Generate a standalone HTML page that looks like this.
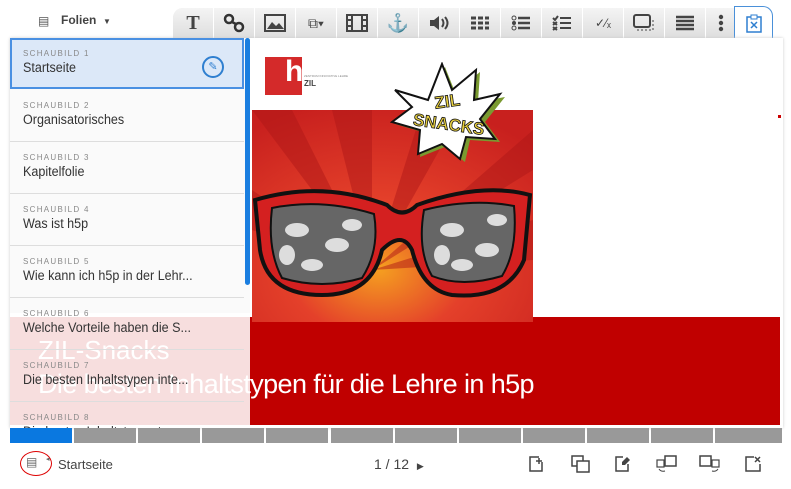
<!DOCTYPE html><html><head><meta charset="utf-8"><style>
body{margin:0;width:791px;height:489px;background:#fff;font-family:"Liberation Sans",sans-serif;position:relative;overflow:hidden}
.a{position:absolute}
.tab{position:absolute;top:8px;height:30px;width:40px;background:linear-gradient(#f4f4f4,#dedede);border-right:1px solid #fff;display:flex;align-items:center;justify-content:center;color:#444}
.item{position:absolute;left:10px;width:234px;height:51px;border-bottom:1px solid #ddd;background:#fafafa}
.item .n{position:absolute;left:13px;top:11px;font-size:8px;letter-spacing:1.3px;color:#888}
.item .t{position:absolute;left:13px;top:22px;font-size:13.5px;color:#333;transform:scaleX(0.93);transform-origin:left;white-space:nowrap}
.seg{position:absolute;top:428px;height:15px;width:62px;background:#999}
.bi{position:absolute;top:455px}
</style></head><body>
<div class="a" style="left:38px;top:14px;font-size:12px;color:#555">&#9636;</div>
<div class="a" style="left:61px;top:13px;font-size:12px;font-weight:bold;color:#444">Folien &nbsp;<span style="font-size:8px">▼</span></div>
<div class="a" style="left:173px;top:8px;width:562px;height:30px;background:#e4e4e4;border-radius:10px 0 0 0"></div>
<div class="tab" style="left:173px;border-radius:10px 0 0 0;font:bold 20px 'Liberation Serif',serif">T</div>
<div class="tab" style="left:214px"><svg width="22" height="20"><circle cx="6" cy="6" r="4" fill="none" stroke="#333" stroke-width="2.5"/><circle cx="16" cy="14" r="4" fill="none" stroke="#333" stroke-width="2.5"/><path d="M9 9l4 2" stroke="#333" stroke-width="2.5"/></svg></div>
<div class="tab" style="left:255px"><svg width="22" height="18"><rect x="1" y="1" width="20" height="16" fill="none" stroke="#444" stroke-width="2"/><path d="M3 15l5-7 4 4 3-3 5 6z" fill="#444"/></svg></div>
<div class="tab" style="left:296px;font-size:14px">⧉▾</div>
<div class="tab" style="left:337px"><svg width="22" height="18"><rect x="1" y="1" width="20" height="16" fill="none" stroke="#444" stroke-width="2"/><path d="M6 1v16M16 1v16M1 6h5M1 12h5M16 6h5M16 12h5" stroke="#444" stroke-width="2"/></svg></div>
<div class="tab" style="left:378px;font-size:18px">⚓</div>
<div class="tab" style="left:419px"><svg width="22" height="18"><path d="M2 6h4l5-4v14l-5-4H2z" fill="#444"/><path d="M14 5q3 4 0 8M17 3q5 6 0 12" stroke="#444" stroke-width="2" fill="none"/></svg></div>
<div class="tab" style="left:460px"><svg width="20" height="16"><path d="M1 3h18M1 8h18M1 13h18" stroke="#444" stroke-width="3" stroke-dasharray="5 2"/></svg></div>
<div class="tab" style="left:501px"><svg width="20" height="16"><circle cx="3" cy="3" r="2" fill="none" stroke="#444"/><circle cx="3" cy="8" r="2" fill="#444"/><circle cx="3" cy="13" r="2" fill="none" stroke="#444"/><path d="M7 3h12M7 8h12M7 13h12" stroke="#444" stroke-width="2.5"/></svg></div>
<div class="tab" style="left:542px"><svg width="20" height="16"><path d="M1 3l2 2 3-4M1 7l4 3M5 7l-4 3M1 12l4 3M5 12l-4 3M8 3h11M8 8h11M8 13h11" stroke="#444" stroke-width="2" fill="none"/></svg></div>
<div class="tab" style="left:583px;font-size:12px">✓⁄ₓ</div>
<div class="tab" style="left:624px"><svg width="22" height="18"><rect x="1" y="1" width="16" height="12" rx="2" fill="none" stroke="#444" stroke-width="2"/><path d="M4 16h16v-10" stroke="#444" stroke-dasharray="2 2" fill="none"/></svg></div>
<div class="tab" style="left:665px"><svg width="20" height="16"><path d="M1 2h18M1 6h18M1 10h18M1 14h18" stroke="#444" stroke-width="2.5"/></svg></div>
<div class="tab" style="left:706px;width:29px"><svg width="6" height="18"><circle cx="3" cy="3" r="2.2" fill="#444"/><circle cx="3" cy="9" r="2.2" fill="#444"/><circle cx="3" cy="15" r="2.2" fill="#444"/></svg></div>
<div class="a" style="left:734px;top:6px;width:37px;height:32px;border:1px solid #4a90d9;border-bottom:none;border-radius:0 10px 0 0;background:#fff;display:flex;align-items:center;justify-content:center"><svg width="18" height="20"><rect x="2" y="4" width="14" height="15" fill="none" stroke="#2f7fd0" stroke-width="1.5"/><rect x="6" y="2" width="6" height="4" fill="#fff" stroke="#2f7fd0"/><path d="M6 9l6 6M12 9l-6 6" stroke="#2f7fd0" stroke-width="1.5"/></svg></div>
<div class="a" style="left:10px;top:38px;width:773px;height:390px;background:#fff;box-shadow:0 0 3px #ccc"></div>
<!-- slide -->
<div class="a" style="left:10px;top:317px;width:770px;height:108px;background:#c00000"></div>
<svg class="a" style="left:252px;top:110px" width="281" height="212" viewBox="0 0 281 212">
<defs><radialGradient id="g" cx="0.45" cy="0.75" r="0.8"><stop offset="0" stop-color="#f5a020"/><stop offset="0.4" stop-color="#e4402a"/><stop offset="1" stop-color="#c8201e"/></radialGradient></defs>
<rect width="281" height="212" fill="url(#g)"/>
<g fill="#b01818" opacity="0.5"><path d="M120 160L0 0h40z"/><path d="M120 160L80 0h40z"/><path d="M120 160L170 0h40z"/><path d="M120 160L281 20v40z"/><path d="M120 160L281 110v40z"/><path d="M120 160L0 80v40z"/></g>
<path d="M3 90 Q70 70 135 95 Q150 110 165 95 Q230 72 278 85 L272 150 Q255 190 200 185 Q170 180 160 140 Q150 120 130 140 Q120 185 70 185 Q15 185 8 140Z" fill="#d42020" stroke="#111" stroke-width="4"/>
<path d="M20 98 Q70 88 122 104 Q128 140 110 168 Q70 180 30 168 Q15 140 20 98Z" fill="#666" stroke="#111" stroke-width="2"/>
<path d="M172 100 Q220 88 262 96 Q266 140 250 166 Q210 178 180 166 Q165 140 172 100Z" fill="#666" stroke="#111" stroke-width="2"/>
<g fill="#ddd"><ellipse cx="45" cy="120" rx="12" ry="7"/><ellipse cx="85" cy="135" rx="12" ry="7"/><ellipse cx="60" cy="155" rx="11" ry="6"/><ellipse cx="100" cy="115" rx="10" ry="6"/><ellipse cx="35" cy="145" rx="8" ry="10"/><ellipse cx="200" cy="120" rx="12" ry="7"/><ellipse cx="235" cy="140" rx="12" ry="7"/><ellipse cx="210" cy="155" rx="11" ry="6"/><ellipse cx="245" cy="110" rx="10" ry="6"/><ellipse cx="190" cy="145" rx="8" ry="10"/></g>
</svg>
<svg class="a" style="left:390px;top:62px" width="120" height="105"><path d="M10 30L40 40 55 5 65 30 90 10 88 40 115 35 95 60 110 80 80 78 75 100 55 85 30 95 32 70 5 62 25 48Z" fill="#7a9a30"/><path d="M5 28L38 38 52 2 62 28 86 8 84 38 110 32 90 57 105 77 76 75 70 97 52 82 28 92 30 68 2 60 22 45Z" fill="#fff" stroke="#111" stroke-width="2"/><text x="58" y="45" font-size="17" font-weight="bold" fill="#e8d040" stroke="#111" stroke-width="0.8" text-anchor="middle" transform="rotate(-8 58 45)">ZIL</text><text x="58" y="68" font-size="17" font-weight="bold" fill="#e8d040" stroke="#111" stroke-width="0.8" text-anchor="middle" transform="rotate(8 58 68)">SNACKS</text></svg>
<div class="a" style="left:265px;top:57px;width:37px;height:38px;background:#d42a2a"></div>
<div class="a" style="left:285px;top:57px;font:bold 30px 'Liberation Sans';color:#fff;line-height:30px">h</div>
<div class="a" style="left:304px;top:79px;font:bold 8px 'Liberation Sans';color:#444">ZIL</div>
<div class="a" style="left:304px;top:74px;font-size:3px;color:#888">ZENTRUM INNOVATIVE LEHRE</div>
<div class="a" style="left:778px;top:115px;width:3px;height:3px;background:#c00"></div>
<div class="a" style="left:38px;top:335px;font-size:26px;color:#fff;white-space:nowrap">ZIL-Snacks</div>
<div class="a" style="left:38px;top:369px;font-size:27px;color:#fff;white-space:nowrap;letter-spacing:-0.6px">Die besten Inhaltstypen für die Lehre in h5p</div>
<!-- sidebar -->
<div class="a" style="left:10px;top:38px;width:240px;height:390px;overflow:hidden">
<div class="a" style="left:0;top:0;width:240px;height:275px;background:#fafafa"></div>
<div class="a" style="left:0;top:275px;width:240px;height:115px;background:rgba(255,255,255,0.87)"></div>
</div>
<div class="item" style="top:38px;background:#dce8f8;border:2px solid #4a90e2;width:230px;height:47px"><div class="n" style="left:11px;top:9px">SCHAUBILD 1</div><div class="t" style="left:11px;top:20px">Startseite</div><div class="a" style="left:190px;top:16px;width:18px;height:18px;border:2px solid #2f7fd0;border-radius:50%;color:#2f7fd0;font-size:11px;text-align:center;line-height:18px">✎</div></div>
<div class="item" style="top:90px"><div class="n">SCHAUBILD 2</div><div class="t">Organisatorisches</div></div>
<div class="item" style="top:142px"><div class="n">SCHAUBILD 3</div><div class="t">Kapitelfolie</div></div>
<div class="item" style="top:194px"><div class="n">SCHAUBILD 4</div><div class="t">Was ist h5p</div></div>
<div class="item" style="top:246px"><div class="n">SCHAUBILD 5</div><div class="t">Wie kann ich h5p in der Lehr...</div></div>
<div class="item" style="top:298px;background:transparent"><div class="n">SCHAUBILD 6</div><div class="t">Welche Vorteile haben die S...</div></div>
<div class="item" style="top:350px;background:transparent"><div class="n">SCHAUBILD 7</div><div class="t">Die besten Inhaltstypen inte...</div></div>
<div class="item" style="top:402px;background:transparent;height:26px;overflow:hidden;border:none"><div class="n">SCHAUBILD 8</div><div class="t">Die besten Inhaltstypen tec...</div></div>
<div class="a" style="left:245px;top:38px;width:5px;height:247px;background:#1a7ee0;border-radius:3px"></div>
<div class="seg" style="left:10px;background:#0a78e0"></div>
<div class="seg" style="left:74px"></div><div class="seg" style="left:138px"></div><div class="seg" style="left:202px"></div><div class="seg" style="left:266px"></div><div class="seg" style="left:331px"></div><div class="seg" style="left:395px"></div><div class="seg" style="left:459px"></div><div class="seg" style="left:523px"></div><div class="seg" style="left:587px"></div><div class="seg" style="left:651px"></div><div class="seg" style="left:715px;width:67px"></div>
<!-- bottom -->
<div class="a" style="left:20px;top:451px;width:30px;height:23px;border:1.5px solid #d00;border-radius:50%"></div>
<div class="a" style="left:26px;top:455px;font-size:12px;color:#666">&#9636;</div>
<div class="a" style="left:46px;top:455px;font-size:7px;color:#666">◂</div>
<div class="a" style="left:58px;top:457px;font-size:13px;color:#444">Startseite</div>
<div class="a" style="left:374px;top:456px;font-size:14px;color:#444">1 / 12 &nbsp;<span style="font-size:9px">▶</span></div>
<svg class="bi" style="left:528px" width="18" height="18"><path d="M11 2H2v14h12V7" fill="none" stroke="#444" stroke-width="1.5"/><path d="M11 3v6M8 6h6" stroke="#444" stroke-width="1.5"/></svg>
<svg class="bi" style="left:571px" width="20" height="18"><rect x="1" y="1" width="11" height="10" fill="none" stroke="#444" stroke-width="1.5"/><rect x="6" y="6" width="12" height="11" fill="#fff" stroke="#444" stroke-width="1.5"/></svg>
<svg class="bi" style="left:614px" width="18" height="18"><path d="M9 2H2v14h12V9" fill="none" stroke="#444" stroke-width="1.5"/><path d="M13 2l3 3-5 5H8V7z" fill="#444"/></svg>
<svg class="bi" style="left:656px" width="22" height="18"><rect x="9" y="1" width="11" height="10" fill="none" stroke="#444" stroke-width="1.5"/><rect x="1" y="5" width="7" height="7" fill="none" stroke="#444" stroke-width="1.2"/><path d="M3 14q2 3 6 2" stroke="#444" fill="none"/></svg>
<svg class="bi" style="left:699px" width="22" height="18"><rect x="1" y="1" width="11" height="10" fill="none" stroke="#444" stroke-width="1.5"/><rect x="13" y="5" width="7" height="7" fill="none" stroke="#444" stroke-width="1.2"/><path d="M19 14q-2 3-6 2" stroke="#444" fill="none"/></svg>
<svg class="bi" style="left:744px" width="18" height="18"><path d="M10 2H2v14h14V9" fill="none" stroke="#444" stroke-width="1.5"/><path d="M11 2l5 5M16 2l-5 5" stroke="#444" stroke-width="1.5"/></svg>
</body></html>
